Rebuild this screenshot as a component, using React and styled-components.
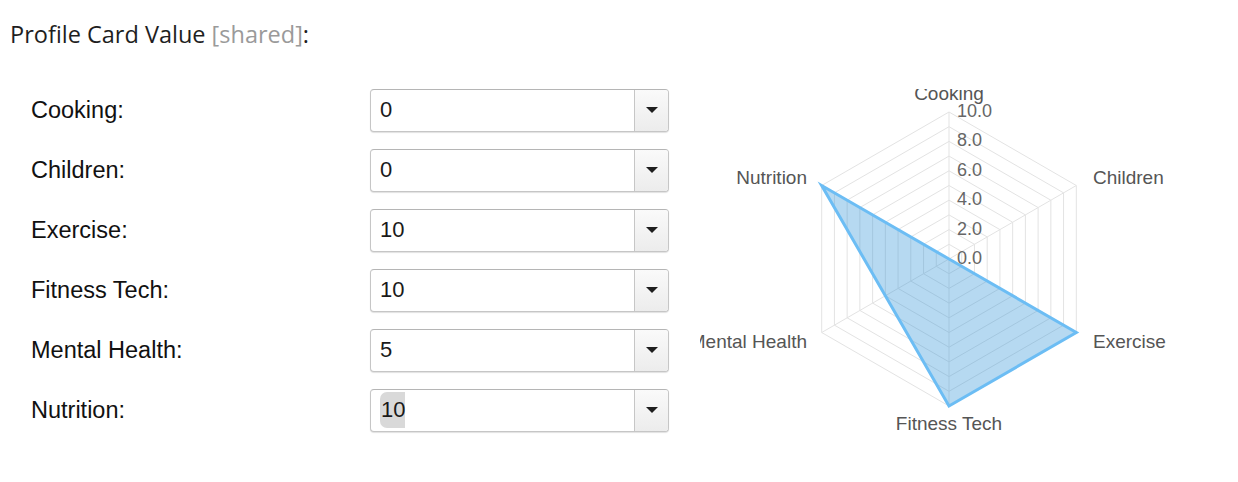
import React from 'react'
import styled, { createGlobalStyle } from 'styled-components'

const GlobalStyle = createGlobalStyle`
  html, body {
    margin: 0;
    padding: 0;
    background: #ffffff;
  }
  body {
    font-family: "Liberation Sans", Arial, sans-serif;
    color: #1a1a1a;
  }
`

const topics = [
  { name: 'Cooking', value: 0 },
  { name: 'Children', value: 0 },
  { name: 'Exercise', value: 10 },
  { name: 'Fitness Tech', value: 10 },
  { name: 'Mental Health', value: 5 },
  { name: 'Nutrition', value: 10, focused: true },
]

function Dropdown({ value, focused }) {
  return (
    <SelectBox>
      <SelectValue>
        {focused ? <Highlight>{value}</Highlight> : value}
      </SelectValue>
      <ArrowButton>
        <Arrow />
      </ArrowButton>
    </SelectBox>
  )
}

// radar chart, drawn the way the chart lib lays it out
const CX = 249
const CY = 170
const R = 147

function point(i, v) {
  const a = -Math.PI / 2 + (i * Math.PI) / 3
  const d = (R * v) / 10
  return [CX + d * Math.cos(a), CY + d * Math.sin(a)]
}

function ring(v) {
  return [0, 1, 2, 3, 4, 5].map((i) => point(i, v).join(',')).join(' ')
}

const pointLabels = [
  { text: 'Cooking', x: 249, y: 11, anchor: 'middle' },
  { text: 'Children', x: 393, y: 95, anchor: 'start' },
  { text: 'Exercise', x: 393, y: 259, anchor: 'start' },
  { text: 'Fitness Tech', x: 249, y: 341, anchor: 'middle' },
  { text: 'Mental Health', x: 107, y: 259, anchor: 'end' },
  { text: 'Nutrition', x: 107, y: 95, anchor: 'end' },
]

function RadarChart() {
  const rings = [1, 2, 3, 4, 5, 6, 7, 8, 9, 10]
  const data = topics.map((t, i) => point(i, t.value).join(',')).join(' ')
  return (
    <ChartSvg width="480" height="352" viewBox="0 0 480 352">
      {rings.map((v) => (
        <polygon key={v} points={ring(v)} fill="none" stroke="#e3e3e3" strokeWidth="1" />
      ))}
      {[0, 1, 2, 3, 4, 5].map((i) => {
        const [x, y] = point(i, 10)
        return <line key={i} x1={CX} y1={CY} x2={x} y2={y} stroke="#e3e3e3" strokeWidth="1" />
      })}
      <polygon
        points={data}
        fill="rgba(54,150,215,0.36)"
        stroke="#6cbdf4"
        strokeWidth="3"
        strokeLinejoin="miter"
      />
      {[0, 2, 4, 6, 8, 10].map((v) => (
        <TickText key={v} x={CX + 8} y={CY - (R * v) / 10 + 5}>
          {v.toFixed(1)}
        </TickText>
      ))}
      {pointLabels.map((l) => (
        <LabelText key={l.text} x={l.x} y={l.y} textAnchor={l.anchor}>
          {l.text}
        </LabelText>
      ))}
    </ChartSvg>
  )
}

export default function App() {
  return (
    <Page>
      <GlobalStyle />
      <Title>
        Profile Card Value <Shared>[shared]</Shared>:
      </Title>
      <Body>
        <Form>
          {topics.map((t) => (
            <Row key={t.name}>
              <Label>{t.name}:</Label>
              <Dropdown value={t.value} focused={t.focused} />
            </Row>
          ))}
        </Form>
        <ChartWrap>
          <RadarChart />
        </ChartWrap>
      </Body>
    </Page>
  )
}

const Page = styled.div`
  width: 1238px;
  height: 482px;
  overflow: hidden;
`

const Title = styled.div`
  font-family: "Open Sans", sans-serif;
  font-size: 23.5px;
  line-height: 32px;
  height: 32px;
  color: #1e1e1e;
  padding: 18px 0 0 10px;
`

const Shared = styled.span`
  color: #9a9a9a;
`

const Body = styled.div`
  display: flex;
  flex-direction: row;
  padding-left: 31px;
`

const Form = styled.div`
  display: flex;
  flex-direction: column;
  gap: 16px;
  padding-top: 38px;
  width: 669px;
`

const Row = styled.div`
  display: flex;
  align-items: center;
  height: 44px;
`

const Label = styled.div`
  width: 339px;
  font-size: 23.5px;
  color: #111;
`

const SelectBox = styled.div`
  display: flex;
  width: 299px;
  height: 43px;
  box-sizing: border-box;
  border: 1px solid #c6c6c6;
  border-top-color: #b5b5b5;
  border-radius: 4px;
  box-shadow: 0 1px 1px rgba(0, 0, 0, 0.12);
  background: #fff;
  overflow: hidden;
`

const SelectValue = styled.div`
  flex: 1;
  display: flex;
  align-items: center;
  padding-left: 9px;
  font-size: 22px;
  color: #1a1a1a;
`

const Highlight = styled.span`
  background: #d9d9d9;
  border-radius: 7px 0 0 7px;
  padding: 5px 0 5px 1px;
`

const ArrowButton = styled.div`
  width: 33px;
  display: flex;
  align-items: center;
  justify-content: center;
  border-left: 1px solid #c6c6c6;
  background: linear-gradient(#fafafa, #ececec);
`

const Arrow = styled.div`
  width: 0;
  height: 0;
  border-left: 6px solid transparent;
  border-right: 6px solid transparent;
  border-top: 6px solid #1e1e1e;
`

const ChartWrap = styled.div`
  padding-top: 39px;
`

const ChartSvg = styled.svg`
  display: block;
  overflow: hidden;
`

const TickText = styled.text`
  font-family: "Liberation Sans", Arial, sans-serif;
  font-size: 18px;
  fill: #666;
`

const LabelText = styled.text`
  font-family: "Liberation Sans", Arial, sans-serif;
  font-size: 19px;
  fill: #555;
`
